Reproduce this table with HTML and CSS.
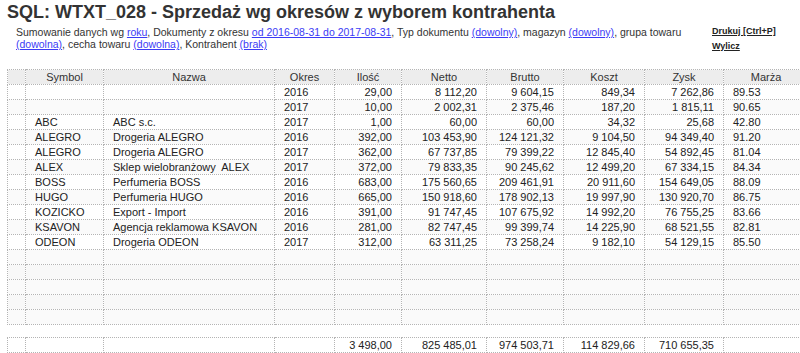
FILE: index.html
```html
<!DOCTYPE html>
<html lang="pl">
<head>
<meta charset="utf-8">
<title>SQL: WTXT_028</title>
<link rel="stylesheet" href="styles.css">
</head>
<body>
<div class="page">
  <h1 class="title">SQL: WTXT_028 - Sprzedaż wg okresów z wyborem kontrahenta</h1>
  <div class="info">
    <p class="desc">Sumowanie danych wg <a href="#">roku</a>, Dokumenty z okresu <a href="#">od 2016-08-31 do 2017-08-31</a>, Typ dokumentu <a href="#">(dowolny)</a>, magazyn <a href="#">(dowolny)</a>, grupa towaru <a href="#">(dowolna)</a>, cecha towaru <a href="#">(dowolna)</a>, Kontrahent <a href="#">(brak)</a></p>
    <div class="actions">
      <a href="#">Drukuj [Ctrl+P]</a>
      <a href="#">Wylicz</a>
    </div>
  </div>
  <table class="grid">
    <colgroup>
      <col class="c0"><col class="c1"><col class="c2"><col class="c3"><col class="c4"><col class="c5"><col class="c6"><col class="c7"><col class="c8"><col class="c9">
    </colgroup>
    <thead>
      <tr><th></th><th>Symbol</th><th>Nazwa</th><th>Okres</th><th>Ilość</th><th>Netto</th><th>Brutto</th><th>Koszt</th><th>Zysk</th><th>Marża</th></tr>
    </thead>
    <tbody>
      <tr><td></td><td></td><td></td><td>2016</td><td class="n">29,00</td><td class="n">8 112,20</td><td class="n">9 604,15</td><td class="n">849,34</td><td class="n">7 262,86</td><td>89.53</td></tr>
      <tr><td></td><td></td><td></td><td>2017</td><td class="n">10,00</td><td class="n">2 002,31</td><td class="n">2 375,46</td><td class="n">187,20</td><td class="n">1 815,11</td><td>90.65</td></tr>
      <tr><td></td><td>ABC</td><td>ABC s.c.</td><td>2017</td><td class="n">1,00</td><td class="n">60,00</td><td class="n">60,00</td><td class="n">34,32</td><td class="n">25,68</td><td>42.80</td></tr>
      <tr><td></td><td>ALEGRO</td><td>Drogeria ALEGRO</td><td>2016</td><td class="n">392,00</td><td class="n">103 453,90</td><td class="n">124 121,32</td><td class="n">9 104,50</td><td class="n">94 349,40</td><td>91.20</td></tr>
      <tr><td></td><td>ALEGRO</td><td>Drogeria ALEGRO</td><td>2017</td><td class="n">362,00</td><td class="n">67 737,85</td><td class="n">79 399,22</td><td class="n">12 845,40</td><td class="n">54 892,45</td><td>81.04</td></tr>
      <tr><td></td><td>ALEX</td><td>Sklep wielobranżowy&nbsp; ALEX</td><td>2017</td><td class="n">372,00</td><td class="n">79 833,35</td><td class="n">90 245,62</td><td class="n">12 499,20</td><td class="n">67 334,15</td><td>84.34</td></tr>
      <tr><td></td><td>BOSS</td><td>Perfumeria BOSS</td><td>2016</td><td class="n">683,00</td><td class="n">175 560,65</td><td class="n">209 461,91</td><td class="n">20 911,60</td><td class="n">154 649,05</td><td>88.09</td></tr>
      <tr><td></td><td>HUGO</td><td>Perfumeria HUGO</td><td>2016</td><td class="n">665,00</td><td class="n">150 918,60</td><td class="n">178 902,13</td><td class="n">19 997,90</td><td class="n">130 920,70</td><td>86.75</td></tr>
      <tr><td></td><td>KOZICKO</td><td>Export - Import</td><td>2016</td><td class="n">391,00</td><td class="n">91 747,45</td><td class="n">107 675,92</td><td class="n">14 992,20</td><td class="n">76 755,25</td><td>83.66</td></tr>
      <tr><td></td><td>KSAVON</td><td>Agencja reklamowa KSAVON</td><td>2016</td><td class="n">281,00</td><td class="n">82 747,45</td><td class="n">99 399,74</td><td class="n">14 225,90</td><td class="n">68 521,55</td><td>82.81</td></tr>
      <tr><td></td><td>ODEON</td><td>Drogeria ODEON</td><td>2017</td><td class="n">312,00</td><td class="n">63 311,25</td><td class="n">73 258,24</td><td class="n">9 182,10</td><td class="n">54 129,15</td><td>85.50</td></tr>
      <tr class="empty"><td></td><td></td><td></td><td></td><td></td><td></td><td></td><td></td><td></td><td></td></tr>
      <tr class="empty"><td></td><td></td><td></td><td></td><td></td><td></td><td></td><td></td><td></td><td></td></tr>
      <tr class="empty"><td></td><td></td><td></td><td></td><td></td><td></td><td></td><td></td><td></td><td></td></tr>
      <tr class="empty"><td></td><td></td><td></td><td></td><td></td><td></td><td></td><td></td><td></td><td></td></tr>
      <tr class="empty"><td></td><td></td><td></td><td></td><td></td><td></td><td></td><td></td><td></td><td></td></tr>
    </tbody>
  </table>
  <table class="grid totals">
    <colgroup>
      <col class="c0"><col class="c1"><col class="c2"><col class="c3"><col class="c4"><col class="c5"><col class="c6"><col class="c7"><col class="c8"><col class="c9">
    </colgroup>
    <tbody>
      <tr><td></td><td></td><td></td><td></td><td class="n">3 498,00</td><td class="n">825 485,01</td><td class="n">974 503,71</td><td class="n">114 829,66</td><td class="n">710 655,35</td><td></td></tr>
    </tbody>
  </table>
</div>
</body>
</html>
```

FILE: styles.css
```css
html, body {
  margin: 0;
  padding: 0;
  background: #fff;
  overflow: hidden;
}

body {
  font-family: "Liberation Sans", Arial, sans-serif;
  color: #333;
}

.page {
  padding: 2px 0 0 7px;
  width: 810px;
}

.title {
  margin: 0;
  font-size: 18px;
  font-weight: bold;
  line-height: 20px;
  color: #333;
  white-space: nowrap;
}

.info {
  display: flex;
  align-items: flex-start;
  margin-top: 4px;
}

.desc {
  margin: 0 0 0 9px;
  width: 682px;
  font-size: 10.5px;
  line-height: 12px;
  color: #333;
}

.desc a {
  color: #3b3bf5;
  text-decoration: underline;
}

.actions {
  display: flex;
  flex-direction: column;
  margin-left: 14px;
  gap: 4px;
}

.actions a {
  font-size: 9px;
  font-weight: bold;
  line-height: 11px;
  color: #222;
  text-decoration: underline;
}

.grid {
  border-collapse: collapse;
  table-layout: fixed;
  width: 801px;
  font-size: 11px;
  color: #222;
  margin-top: 17px;
}

.grid th,
.grid td {
  border: 1px dotted #b4b4b4;
  height: 14px;
  padding: 0 9px;
  line-height: 14px;
  white-space: nowrap;
  overflow: hidden;
  text-align: left;
}

.grid th {
  background: #ededed;
  font-weight: normal;
  text-align: center;
  color: #333;
}

.grid td.n {
  text-align: right;
}

.grid tbody tr:nth-child(even) td {
  background: #fafafa;
}

.grid tr.empty td {
  background: #f8f8f8;
}

.totals {
  margin-top: 12px;
}

.totals tbody tr td {
  background: #fff;
}

.c0 { width: 18px; }
.c1 { width: 78px; }
.c2 { width: 171px; }
.c3 { width: 60px; }
.c4 { width: 67px; }
.c5 { width: 85px; }
.c6 { width: 77px; }
.c7 { width: 81px; }
.c8 { width: 79px; }
.c9 { width: 85px; }
```
